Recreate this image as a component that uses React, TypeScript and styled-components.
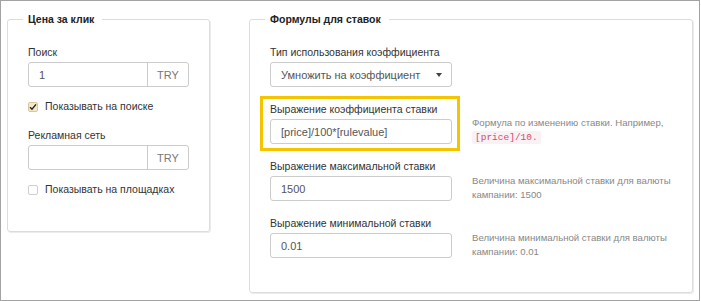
import styled, { createGlobalStyle } from 'styled-components'

const GlobalStyle = createGlobalStyle`
  body {
    margin: 0;
    background: #ffffff;
    font-family: 'Liberation Sans', Arial, sans-serif;
  }
`

const Frame = styled.div`
  box-sizing: border-box;
  width: 700px;
  height: 301px;
  border: 1px solid #a3a3a3;
  padding: 12px 6px 0 6px;
  display: flex;
  align-items: flex-start;
  gap: 39px;
`

const Panel = styled.fieldset<{ $width: number; $bottom: number }>`
  box-sizing: border-box;
  width: ${({ $width }) => $width}px;
  margin: 0;
  padding: 20px 20px ${({ $bottom }) => $bottom}px 20px;
  border: 1px solid #dcdcdc;
  border-radius: 3px;
  box-shadow: 1px 1px 0 #ececec;
  min-width: 0;
`

const Legend = styled.legend`
  margin-left: -5px;
  padding: 0 8px 0 5px;
  font-size: 10.5px;
  line-height: 13px;
  font-weight: bold;
  color: #222;
`

const Field = styled.div`
  display: flex;
  flex-direction: column;
`

const Label = styled.label`
  font-size: 10.5px;
  line-height: 13px;
  color: #333;
  margin-bottom: 3px;
`

const InputGroup = styled.div`
  display: flex;
  height: 25px;
  box-sizing: border-box;
  border: 1px solid #cccccc;
  border-radius: 3px;
  overflow: hidden;
`

const TextInput = styled.div`
  box-sizing: border-box;
  height: 25px;
  padding: 0 10px;
  border: 1px solid #cccccc;
  border-radius: 3px;
  display: flex;
  align-items: center;
  font-size: 11px;
  color: #555;

  ${InputGroup} & {
    flex: 1;
    border: none;
    border-radius: 0;
    height: 23px;
  }
`

const Addon = styled.div`
  width: 40px;
  border-left: 1px solid #cccccc;
  display: flex;
  align-items: center;
  justify-content: center;
  font-size: 11px;
  color: #777;
`

const CheckRow = styled.div<{ $top: number }>`
  display: flex;
  align-items: center;
  gap: 7px;
  margin-top: ${({ $top }) => $top}px;
`

const CheckBox = styled.span<{ $checked?: boolean }>`
  box-sizing: border-box;
  width: 10px;
  height: 10px;
  border-radius: 2px;
  border: 1px solid ${({ $checked }) => ($checked ? '#d9c79b' : '#cfcfcf')};
  background: ${({ $checked }) => ($checked ? '#f3e8c8' : '#ffffff')};
  display: flex;
  align-items: center;
  justify-content: center;
`

const CheckText = styled.span`
  font-size: 10.5px;
  line-height: 13px;
  color: #333;
`

const Spacer = styled.div<{ $h: number }>`
  height: ${({ $h }) => $h}px;
`

const Rows = styled.div`
  display: flex;
  flex-direction: column;
  gap: 16px;
`

const Row = styled.div`
  display: grid;
  grid-template-columns: 182px 1fr;
  column-gap: 20px;
  align-items: end;
`

const Highlight = styled.div`
  border: 3px solid #f5c400;
  padding: 4px 5px 4px 7px;
  margin: -7px -8px -7px -10px;
`

const Help = styled.div`
  font-size: 9.6px;
  line-height: 14px;
  color: #888;
  margin-bottom: -1px;
`

const Code = styled.code`
  font-family: 'Liberation Mono', 'DejaVu Sans Mono', monospace;
  font-size: 9.5px;
  color: #d14c74;
  background: #faf1f4;
  padding: 1px 3px;
  border-radius: 2px;
`

const SelectBox = styled.div`
  box-sizing: border-box;
  height: 25px;
  padding: 0 10px;
  border: 1px solid #cccccc;
  border-radius: 3px;
  display: flex;
  align-items: center;
  justify-content: space-between;
  font-size: 11px;
  color: #555;
`

const Caret = styled.span`
  width: 0;
  height: 0;
  border-left: 3px solid transparent;
  border-right: 3px solid transparent;
  border-top: 4px solid #444;
  margin-right: -1px;
`

const Check = () => (
  <svg width='8' height='8' viewBox='0 0 8 8'>
    <path d='M1 4.2 L3 6.2 L7 1.4' fill='none' stroke='#222' strokeWidth='1.4' />
  </svg>
)

const App = () => {
  return (
    <>
      <GlobalStyle />
      <Frame>
        <Panel $width={203} $bottom={35}>
          <Legend>Цена за клик</Legend>
          <Field>
            <Label>Поиск</Label>
            <InputGroup>
              <TextInput>1</TextInput>
              <Addon>TRY</Addon>
            </InputGroup>
          </Field>
          <CheckRow $top={13}>
            <CheckBox $checked>
              <Check />
            </CheckBox>
            <CheckText>Показывать на поиске</CheckText>
          </CheckRow>
          <Spacer $h={16} />
          <Field>
            <Label>Рекламная сеть</Label>
            <InputGroup>
              <TextInput />
              <Addon>TRY</Addon>
            </InputGroup>
          </Field>
          <CheckRow $top={13}>
            <CheckBox />
            <CheckText>Показывать на площадках</CheckText>
          </CheckRow>
        </Panel>

        <Panel $width={444} $bottom={34}>
          <Legend>Формулы для ставок</Legend>
          <Rows>
            <Row>
              <Field>
                <Label>Тип использования коэффициента</Label>
                <SelectBox>
                  Умножить на коэффициент
                  <Caret />
                </SelectBox>
              </Field>
            </Row>
            <Row>
              <Highlight>
                <Field>
                  <Label>Выражение коэффициента ставки</Label>
                  <TextInput>[price]/100*[rulevalue]</TextInput>
                </Field>
              </Highlight>
              <Help>
                Формула по изменению ставки. Например,
                <br />
                <Code>[price]/10.</Code>
              </Help>
            </Row>
            <Row>
              <Field>
                <Label>Выражение максимальной ставки</Label>
                <TextInput>1500</TextInput>
              </Field>
              <Help>Величина максимальной ставки для валюты кампании: 1500</Help>
            </Row>
            <Row>
              <Field>
                <Label>Выражение минимальной ставки</Label>
                <TextInput>0.01</TextInput>
              </Field>
              <Help>Величина минимальной ставки для валюты кампании: 0.01</Help>
            </Row>
          </Rows>
        </Panel>
      </Frame>
    </>
  )
}

export default App
